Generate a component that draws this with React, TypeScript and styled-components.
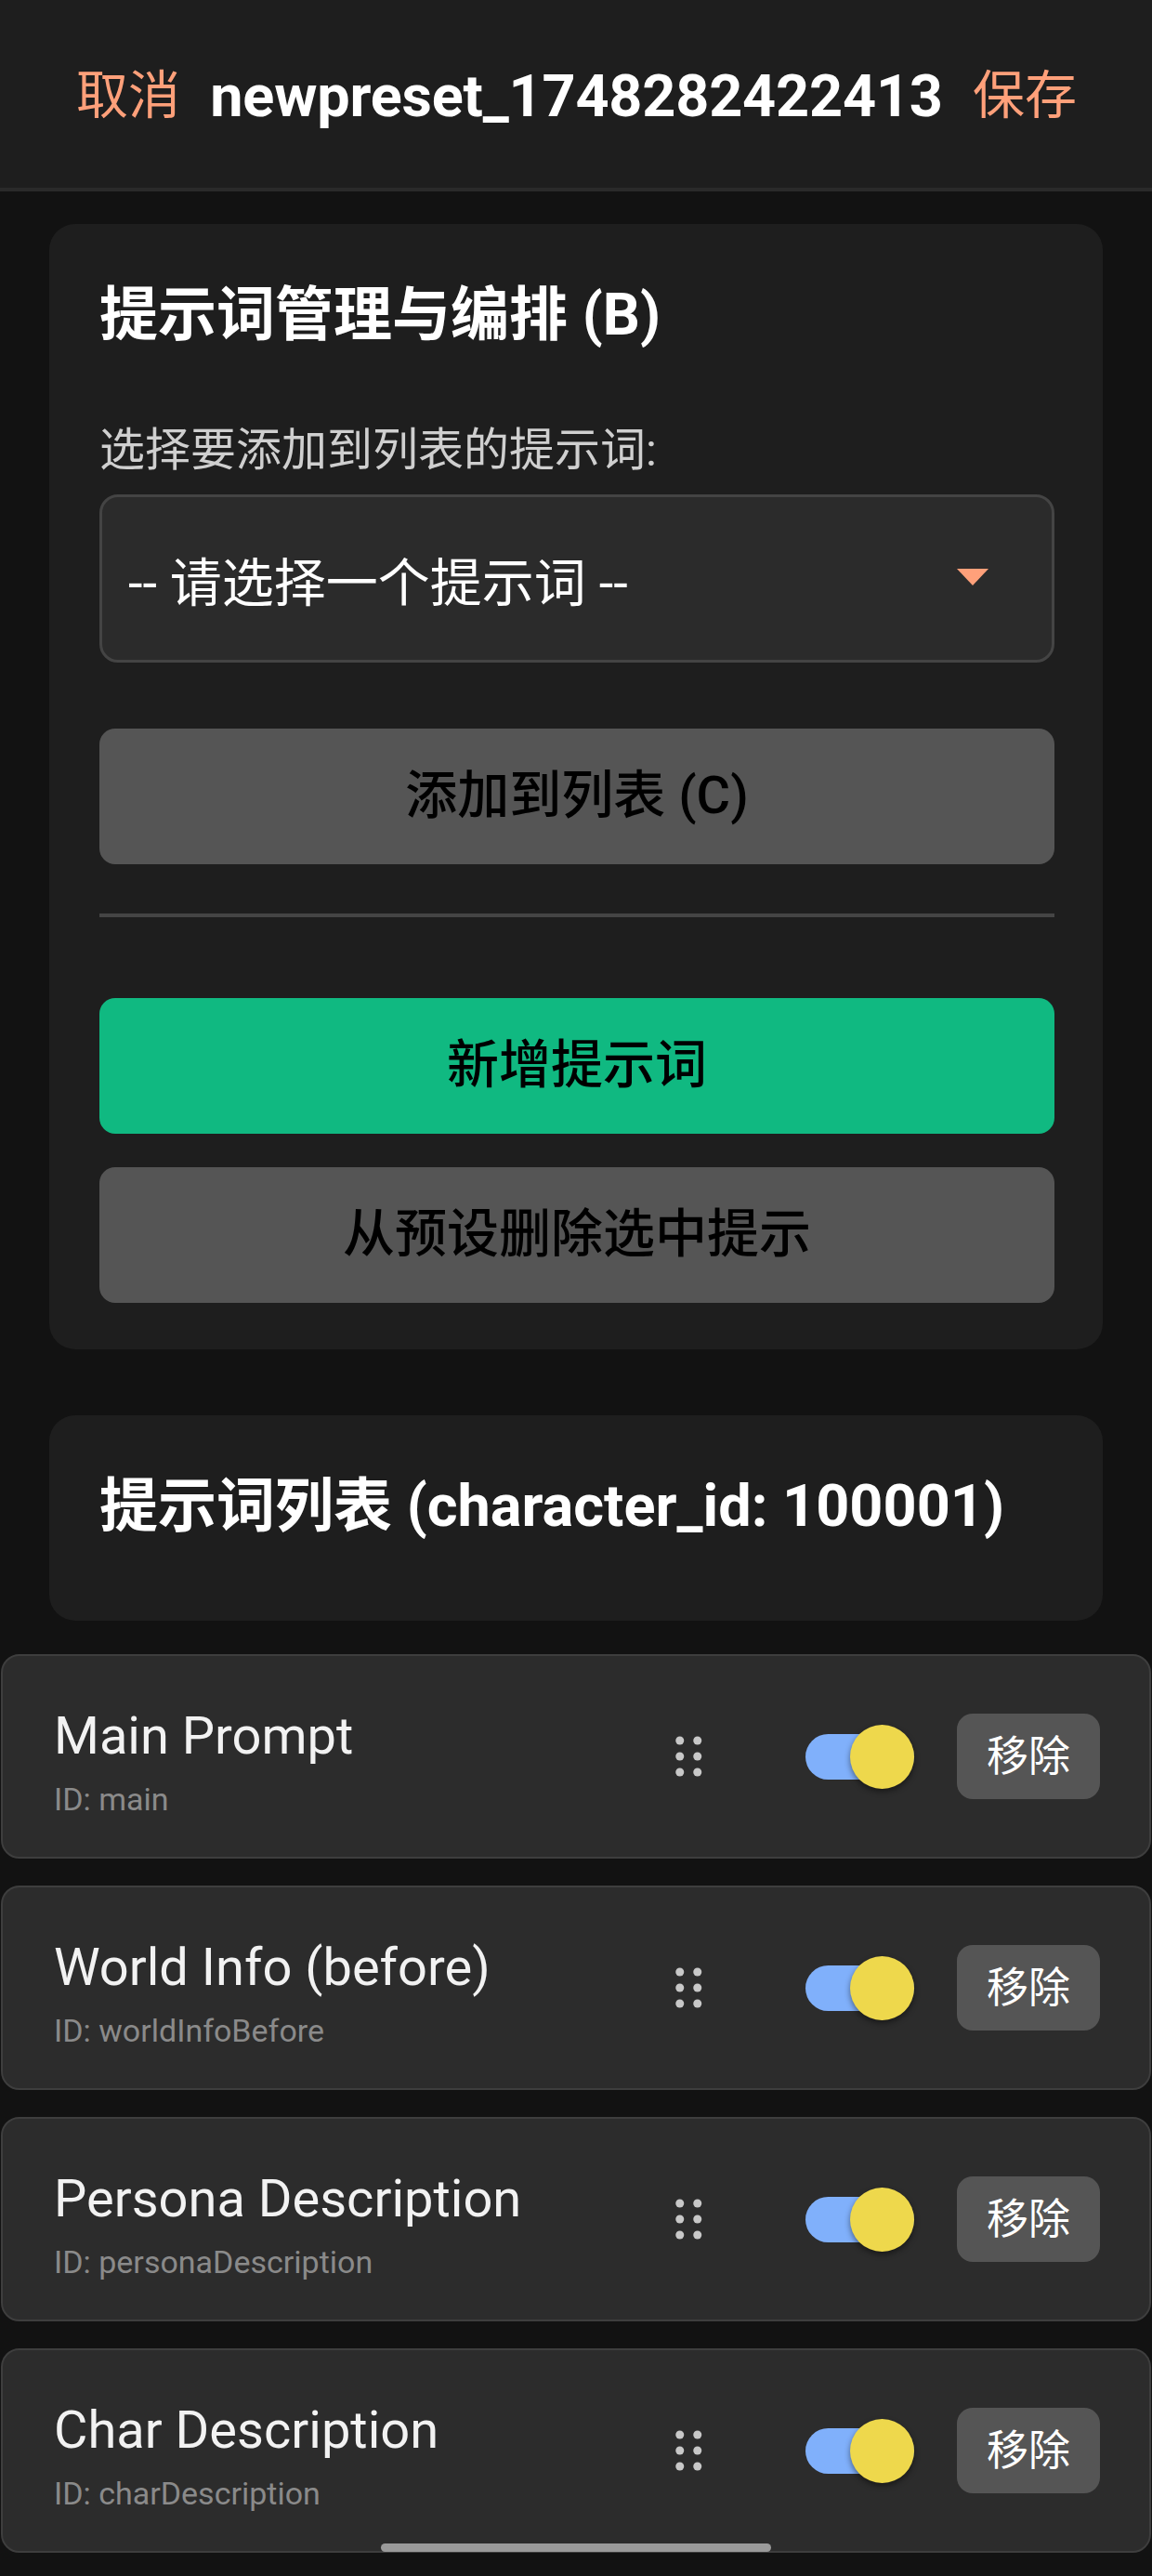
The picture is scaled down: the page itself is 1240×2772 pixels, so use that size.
import React from "react";
import styled, { createGlobalStyle } from "styled-components";

const GlobalStyle = createGlobalStyle`
  html, body {
    margin: 0;
    padding: 0;
    background: #121212;
  }
  body {
    font-family: Roboto, "Noto Sans CJK SC", sans-serif;
    color: #ffffff;
  }
  * { box-sizing: border-box; }
`;

const Page = styled.div`
  position: relative;
  min-height: 2772px;
  background: #121212;
`;

const Header = styled.header`
  height: 206px;
  background: #1e1e1e;
  border-bottom: 4px solid #2a2a2a;
  display: flex;
  align-items: center;
  justify-content: space-between;
  padding: 5px 81px 0 82px;
`;

const HeaderAction = styled.button`
  background: none;
  border: 0;
  padding: 0;
  color: #ffa07a;
  font-family: inherit;
  font-size: 56px;
  line-height: 1.2;
`;

const HeaderTitle = styled.h1`
  margin: 0;
  font-size: 63px;
  font-weight: 700;
  line-height: 1.2;
  letter-spacing: -0.2px;
  color: #ffffff;
`;

const Main = styled.main`
  padding: 35px 53px 0;
`;

const Card = styled.section<{ $gapTop?: number }>`
  background: #1e1e1e;
  border-radius: 28px;
  padding: 53px 52px 50px 54px;
  margin-top: ${(p) => p.$gapTop ?? 0}px;
  display: flex;
  flex-direction: column;
`;

const CardTitle = styled.h2<{ $mb: number }>`
  margin: 0 0 ${(p) => p.$mb}px;
  padding-top: 7px;
  font-size: 63px;
  line-height: 76px;
  font-weight: 700;
  color: #ffffff;
`;

const FieldLabel = styled.label`
  display: block;
  font-size: 49px;
  line-height: 59px;
  color: #cfcfcf;
  margin-top: 43px;
`;

const SelectBox = styled.div`
  margin-top: 18px;
  height: 181px;
  background: #2b2b2b;
  border: 3px solid #444444;
  border-radius: 20px;
  display: flex;
  align-items: center;
  justify-content: space-between;
  padding: 12px 68px 0 28px;
`;

const SelectText = styled.span`
  font-size: 56px;
  color: #ffffff;
  line-height: 1.2;
`;

const Caret = styled.span`
  width: 0;
  height: 0;
  border-left: 17px solid transparent;
  border-right: 17px solid transparent;
  border-top: 18px solid #ffa07a;
  margin-top: -16px;
`;

const ActionButton = styled.button<{ $variant: "gray" | "green"; $mt: number }>`
  margin-top: ${(p) => p.$mt}px;
  height: 146px;
  width: 100%;
  border: 0;
  border-radius: 17px;
  background: ${(p) => (p.$variant === "green" ? "#10b981" : "#555555")};
  color: #000000;
  font-family: inherit;
  font-size: 56px;
  font-weight: 500;
  line-height: 1.2;
`;

const Divider = styled.hr`
  margin: 53px 0 0;
  border: 0;
  height: 4px;
  background: #454545;
`;

const List = styled.ul`
  list-style: none;
  margin: 36px 1px 0;
  padding: 0;
  display: flex;
  flex-direction: column;
  gap: 29px;
`;

const Item = styled.li`
  height: 220px;
  background: #2c2c2c;
  border: 2px solid #3e3e3e;
  border-radius: 20px;
  display: flex;
  align-items: center;
  padding: 0 53px 0 55px;
`;

const ItemInfo = styled.div`
  flex: 1;
  min-width: 0;
  display: flex;
  flex-direction: column;
  padding-top: 12px;
`;

const ItemName = styled.div`
  font-size: 56px;
  line-height: 1.2;
  color: #f2f2f2;
`;

const ItemId = styled.div`
  margin-top: 14px;
  font-size: 34px;
  line-height: 1.2;
  color: #8a8a8a;
`;

const Handle = styled.svg`
  display: block;
  margin-right: 111px;
  flex: none;
`;

const Toggle = styled.div`
  position: relative;
  width: 117px;
  height: 69px;
  margin-right: 46px;
  flex: none;
`;

const ToggleTrack = styled.span`
  position: absolute;
  left: 0;
  top: 10px;
  width: 117px;
  height: 49px;
  border-radius: 25px;
  background: #80b0fb;
`;

const ToggleThumb = styled.span`
  position: absolute;
  right: 0;
  top: 0;
  width: 69px;
  height: 69px;
  border-radius: 50%;
  background: #eed84c;
  box-shadow: 0 3px 6px rgba(0, 0, 0, 0.45);
`;

const RemoveButton = styled.button`
  width: 154px;
  height: 92px;
  flex: none;
  border: 0;
  border-radius: 17px;
  background: #555555;
  color: #ffffff;
  font-family: inherit;
  font-size: 45px;
  line-height: 1;
`;

const HomeIndicator = styled.div`
  position: absolute;
  left: 410px;
  bottom: 26px;
  width: 420px;
  height: 9px;
  border-radius: 5px;
  background: #9a9a9a;
`;

const prompts = [
  { name: "Main Prompt", id: "main" },
  { name: "World Info (before)", id: "worldInfoBefore" },
  { name: "Persona Description", id: "personaDescription" },
  { name: "Char Description", id: "charDescription" },
];

const DragHandle = () => (
  <Handle width="29" height="44" viewBox="0 0 29 44" aria-hidden>
    {[5, 22, 39].map((cy) =>
      [4.75, 23.75].map((cx) => (
        <circle key={`${cx}-${cy}`} cx={cx} cy={cy} r="4.5" fill="#c8c8c8" />
      ))
    )}
  </Handle>
);

export default function App() {
  return (
    <Page>
      <GlobalStyle />
      <Header>
        <HeaderAction>取消</HeaderAction>
        <HeaderTitle>newpreset_1748282422413</HeaderTitle>
        <HeaderAction>保存</HeaderAction>
      </Header>
      <Main>
        <Card>
          <CardTitle $mb={35}>提示词管理与编排 (B)</CardTitle>
          <FieldLabel>选择要添加到列表的提示词:</FieldLabel>
          <SelectBox>
            <SelectText>-- 请选择一个提示词 --</SelectText>
            <Caret />
          </SelectBox>
          <ActionButton $variant="gray" $mt={71}>
            添加到列表 (C)
          </ActionButton>
          <Divider />
          <ActionButton $variant="green" $mt={87}>
            新增提示词
          </ActionButton>
          <ActionButton $variant="gray" $mt={36}>
            从预设删除选中提示
          </ActionButton>
        </Card>
        <Card $gapTop={71}>
          <CardTitle $mb={35}>提示词列表 (character_id: 100001)</CardTitle>
        </Card>
      </Main>
      <List>
        {prompts.map((p) => (
          <Item key={p.id}>
            <ItemInfo>
              <ItemName>{p.name}</ItemName>
              <ItemId>ID: {p.id}</ItemId>
            </ItemInfo>
            <DragHandle />
            <Toggle>
              <ToggleTrack />
              <ToggleThumb />
            </Toggle>
            <RemoveButton>移除</RemoveButton>
          </Item>
        ))}
      </List>
      <HomeIndicator />
    </Page>
  );
}
